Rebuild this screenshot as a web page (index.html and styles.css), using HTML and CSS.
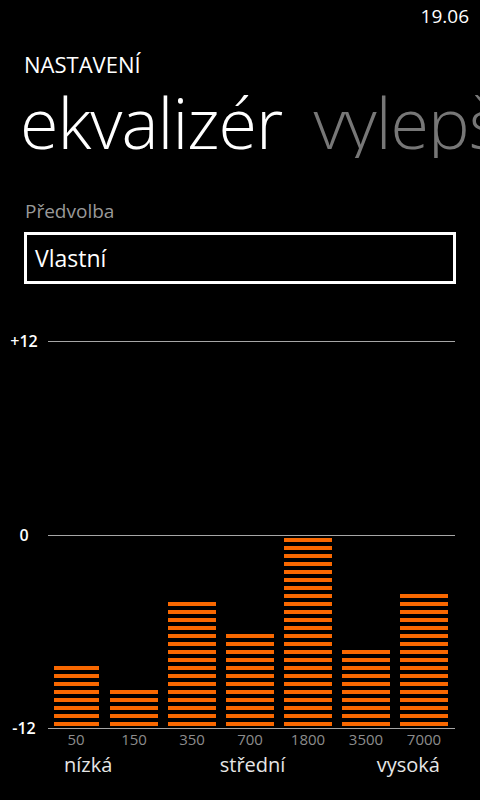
FILE: index.html
```html
<!DOCTYPE html>
<html>
<head>
  <meta charset="UTF-8">
  <title>Ekvalizér</title>
  <link rel="stylesheet" href="styles.css">
</head>
<body>
  <div class="status">19.06</div>

  <div class="app-title">NASTAVENÍ</div>
  <div class="pivot">
    <span class="pivot-item active">ekvalizér</span>
    <span class="pivot-item">vylepšení</span>
  </div>

  <div class="field-label">Předvolba</div>
  <div class="picker">Vlastní</div>

  <div class="chart">
    <div class="plot">
      <div class="axis">
        <div class="axis-row"><span class="axis-label">+12</span><span class="axis-line"></span></div>
        <div class="axis-row mid"><span class="axis-label">0</span><span class="axis-line"></span></div>
        <div class="axis-row"><span class="axis-label">-12</span><span class="axis-line"></span></div>
      </div>
      <div class="bars">
        <div class="bar first" style="height: 60px"></div>
        <div class="bar" style="height: 36px"></div>
        <div class="bar" style="height: 124px"></div>
        <div class="bar" style="height: 92px"></div>
        <div class="bar" style="height: 188px"></div>
        <div class="bar" style="height: 76px"></div>
        <div class="bar" style="height: 132px"></div>
      </div>
    </div>

    <div class="freqs">
      <span>50</span>
      <span>150</span>
      <span>350</span>
      <span>700</span>
      <span>1800</span>
      <span>3500</span>
      <span>7000</span>
    </div>

    <div class="ranges">
      <span>nízká</span>
      <span class="middle">střední</span>
      <span>vysoká</span>
    </div>
  </div>
</body>
</html>
```

FILE: styles.css
```css
body {
  margin: 0;
  width: 480px;
  height: 800px;
  overflow: hidden;
  background-color: #000;
  color: #fff;
  font-family: "Open Sans", "Noto Sans", sans-serif;
}

.status {
  height: 32px;
  line-height: 32px;
  font-size: 19px;
  text-align: right;
  padding-right: 11px;
}

.app-title {
  margin-top: 18px;
  padding-left: 24px;
  font-size: 22px;
  line-height: 28px;
}

.pivot {
  margin-top: 8px;
  padding-left: 20px;
  white-space: nowrap;
  overflow: hidden;
  font-size: 70px;
  font-weight: 300;
  line-height: 72px;
  letter-spacing: -1px;
}

.pivot-item {
  color: #777;
  margin-left: 14px;
}

.pivot-item.active {
  color: #fff;
  margin-left: 0;
}

.field-label {
  margin-top: 41px;
  padding-left: 25px;
  font-size: 19px;
  line-height: 24px;
  color: #999;
}

.picker {
  margin: 9px 24px 0 24px;
  border: 3px solid #fff;
  padding: 9px 8px;
  font-size: 23px;
  line-height: 28px;
}

.chart {
  margin-top: 57px;
}

.plot {
  display: grid;
}

.axis, .bars {
  grid-area: 1 / 1;
}

.axis {
  display: flex;
  flex-direction: column;
}

.axis-row {
  display: flex;
  align-items: center;
  height: 1px;
}

.axis-row.mid {
  margin: 193px 0 192px 0;
}

.axis-label {
  width: 48px;
  text-align: center;
  font-size: 16px;
  font-weight: 600;
  line-height: 1px;
}

.axis-line {
  width: 407px;
  height: 1px;
  background-color: #a6a6a6;
}

.bars {
  align-self: end;
  display: flex;
  align-items: flex-end;
  gap: 10px;
  padding: 0 0 3px 52px;
}

.bar {
  width: 48px;
  background: repeating-linear-gradient(to top, #f96800 0, #f96800 4px, transparent 4px, transparent 8px);
}

.bar.first {
  width: 45px;
  margin-left: 2px;
  margin-right: 1px;
}

.freqs {
  display: flex;
  gap: 10px;
  padding-left: 52px;
  margin-top: 1px;
}

.freqs span {
  width: 48px;
  text-align: center;
  font-size: 15px;
  line-height: 18px;
  color: #8c8c8c;
}

.ranges {
  display: flex;
  justify-content: space-between;
  width: 376px;
  margin: 4px 0 0 64px;
  font-size: 20px;
  line-height: 26px;
  color: #e6e6e6;
}

.ranges .middle {
  margin-left: 16px;
}
```
